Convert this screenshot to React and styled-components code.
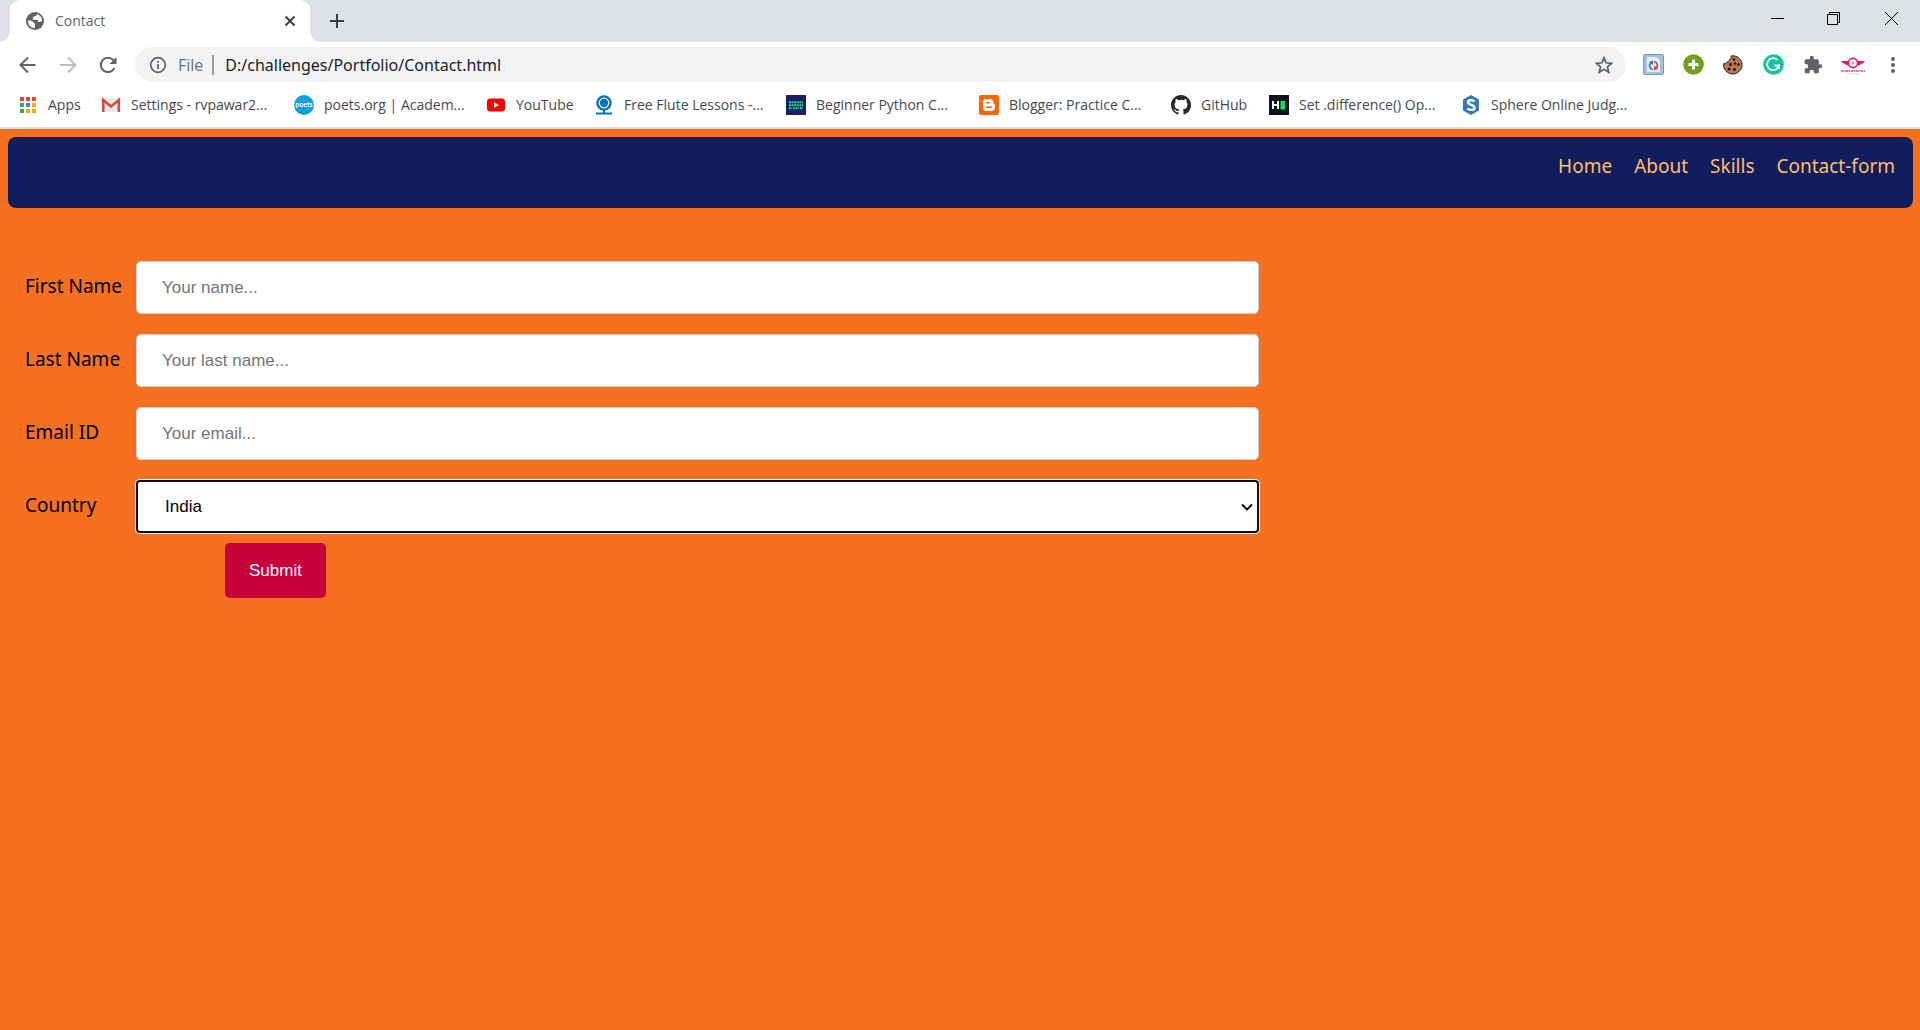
import React from "react";
import styled, { createGlobalStyle } from "styled-components";

const GlobalStyle = createGlobalStyle`
  * { box-sizing: border-box; }
  html, body, #root { margin: 0; min-height: 100vh; }
  body { background: #f57121; }
  button { border: 0; padding: 0; background: none; }
  svg { display: block; flex: none; }
`;

const Screen = styled.div`
  min-height: 100vh;
  display: flex;
  flex-direction: column;
  font-family: "Open Sans", "Noto Sans", sans-serif;
`;

const TabStrip = styled.div`
  height: 42px;
  background: #dee1e6;
  display: flex;
  align-items: flex-end;
  justify-content: space-between;
`;

const TabGroup = styled.div`
  display: flex;
  height: 100%;
`;

const TabCurve = styled.div`
  width: 10px;
  align-self: flex-end;
  height: 10px;
  background: radial-gradient(circle at ${(p) => (p.$right ? "100%" : "0")} 0, #dee1e6 9px, #fff 10px);
`;

const Tab = styled.div`
  width: 300px;
  background: #fff;
  border-radius: 10px 10px 0 0;
  display: flex;
  align-items: center;
  gap: 11px;
  padding: 0 14px 0 16px;
`;

const TabTitle = styled.span`
  flex: 1;
  font-size: 14px;
  line-height: 20px;
  color: #5f6368;
`;

const IconButton = styled.button`
  display: grid;
  place-items: center;
  width: ${(p) => p.$w || 40}px;
  height: ${(p) => p.$h || 36}px;
`;

const WindowButtons = styled.div`
  display: flex;
  align-self: flex-start;
`;

const Toolbar = styled.div`
  height: 45px;
  background: #fff;
  display: flex;
  align-items: center;
  padding: 0 7px 0 8px;
`;

const AddressBar = styled.label`
  flex: 1;
  height: 35px;
  margin: 0 7px;
  border-radius: 18px;
  background: #f1f3f4;
  display: flex;
  align-items: center;
  padding: 0 2px 0 14px;
`;

const Scheme = styled.span`
  font-size: 16px;
  line-height: 20px;
  color: #6b6f74;
  margin-left: 11px;
  padding-right: 9px;
  border-right: 2px solid #9a9da1;
`;

const Address = styled.input`
  flex: 1;
  min-width: 0;
  border: 0;
  outline: 0;
  background: none;
  padding: 0 0 0 11px;
  font: 16px/20px "Noto Sans", "Open Sans", sans-serif;
  color: #202124;
`;

const Bookmarks = styled.nav`
  height: 42px;
  background: #fff;
  border-bottom: 2px solid #dadce0;
  display: flex;
  align-items: center;
  padding: 0 0 4px 18px;
`;

const Bookmark = styled.a`
  display: flex;
  align-items: center;
  gap: 10px;
  width: ${(p) => p.$w}px;
  flex: none;
  font-size: 14px;
  line-height: 20px;
  color: #45494d;
  text-decoration: none;
  white-space: nowrap;
`;

const Page = styled.div`
  flex: 1;
  background: #f57121;
  padding: 8px 7px 8px 8px;
  font-family: "Noto Sans", "Open Sans", sans-serif;
`;

const SiteNav = styled.nav`
  height: 71px;
  background: #121d5e;
  border-radius: 8px;
  display: flex;
  justify-content: flex-end;
  gap: 22px;
  padding: 15px 18px;
`;

const SiteLink = styled.a`
  font-size: 19px;
  line-height: 28px;
  color: #ffbd69;
  text-decoration: none;
`;

const Form = styled.form`
  margin: 53px 17px 0;
  display: grid;
  grid-template-columns: 111px 60%;
  row-gap: 20px;
  align-items: center;
`;

const Label = styled.label`
  font-size: 19px;
  line-height: 28px;
  padding-bottom: 4px;
  color: #000;
  white-space: nowrap;
`;

const Input = styled.input`
  width: 100%;
  height: 53px;
  border: 1px solid #ccc;
  border-radius: 5px;
  padding: 0 25px;
  background: #fff;
  outline: 0;
  font: 17px/20px "Liberation Sans", Arial, sans-serif;
  &::placeholder { color: #757575; opacity: 1; }
`;

const SelectBox = styled.div`
  display: grid;
  align-items: center;
  > * { grid-area: 1 / 1; }
  > svg { justify-self: end; margin-right: 6px; pointer-events: none; }
`;

const Select = styled.select`
  width: 100%;
  height: 53px;
  appearance: none;
  border: 2px solid #101010;
  border-radius: 4px;
  box-shadow: 0 0 0 1px #fff;
  padding: 0 27px;
  background: #fff;
  color: #000;
  outline: 0;
  font: 17px/20px "Liberation Sans", Arial, sans-serif;
`;

const Actions = styled.div`
  grid-column: 1 / -1;
  margin-top: -10px;
  padding-left: 200px;
`;

const Submit = styled.button`
  padding: 0 24px;
  height: 55px;
  border-radius: 5px;
  background: #c70039;
  color: #fff;
  font: 17px/20px "Liberation Sans", Arial, sans-serif;
`;

const Globe = () => (
  <svg width="18" height="18" viewBox="0 0 18 18">
    <circle cx="9" cy="9" r="9" fill="#5f6368" />
    <path d="M2 8.500c2 0 4.500.3 5 1.600.4 1.200 2 .8 2 2.400v3.500C5 16.300 1.700 13 2 8.500ZM11 2.300c-.2 1.500-1.500 2-3 2.200-.8.200-.5 1.500-1.300 1.700l.3 1.500h3.500c1.500 0 1.500 2.300 3 2.300l2.500-.7c.5-3.500-2-6.300-5-7Z" fill="#fff" />
  </svg>
);
const Stroke = ({ d, size = 20, color = "#5f6368", w = 2, box = 20 }) => (
  <svg width={size} height={size} viewBox={`0 0 ${box} ${box}`} fill="none" stroke={color} strokeWidth={w}><path d={d} /></svg>
);
const Reload = () => (
  <svg width="20" height="20" viewBox="0 0 20 20" fill="none" stroke="#5f6368" strokeWidth="2">
    <path d="M16.500 13A7.200 7.200 0 1 1 15.500 5.200" /><path d="M18.500 2v7h-7Z" fill="#5f6368" stroke="none" />
  </svg>
);
const Info = () => (
  <svg width="18" height="18" viewBox="0 0 18 18"><circle cx="9" cy="9" r="7.300" fill="none" stroke="#5f6368" strokeWidth="1.700" /><path d="M8.100 8h1.800v5H8.100ZM8.100 5h1.800v1.800H8.100Z" fill="#5f6368" /></svg>
);
const Star = () => (
  <svg width="20" height="20" viewBox="0 0 20 20"><path d="m10 2.800 2.100 5 5.400.5-4.100 3.500 1.300 5.300-4.700-2.900-4.700 2.900 1.300-5.300-4.100-3.500 5.400-.5Z" fill="none" stroke="#5f6368" strokeWidth="1.700" /></svg>
);
const Puzzle = () => (
  <svg width="20" height="20" viewBox="0 0 24 24"><path d="M20.500 11H19V7c0-1.100-.9-2-2-2h-4V3.500a2.500 2.500 0 0 0-5 0V5H4c-1.100 0-2 .9-2 2v3.800h1.500a2.700 2.700 0 0 1 0 5.400H2V20c0 1.100.9 2 2 2h3.800v-1.500a2.700 2.700 0 0 1 5.400 0V22H17c1.100 0 2-.9 2-2v-4h1.500a2.500 2.500 0 0 0 0-5Z" fill="#5f6368" /></svg>
);
const SyncExt = () => (
  <svg width="21" height="21" viewBox="0 0 21 21"><rect x=".5" y=".5" width="20" height="20" rx="1.500" fill="#a3c3dc" stroke="#7198b8" /><path d="M4 3h9l4 3v12H4Z" fill="#e4effa" /><path d="M10 15.500a4 4 0 0 1-2.500-6.500" fill="none" stroke="#2f6fc0" strokeWidth="1.700" /><path d="M11 7.500a4 4 0 0 1 2.500 6.500" fill="none" stroke="#e03a2f" strokeWidth="1.700" /><path d="m6 8 4-1.500V11Z" fill="#2f6fc0" /><path d="m15.500 14-4.500 2.500V12Z" fill="#e03a2f" /></svg>
);
const PlusExt = () => (
  <svg width="21" height="21" viewBox="0 0 21 21"><circle cx="10.500" cy="10.500" r="10.300" fill="#739e1e" /><path d="M10.500 5.500v10M5.500 10.500h10" stroke="#fff" strokeWidth="3" /></svg>
);
const Cookie = () => (
  <svg width="20" height="20" viewBox="0 0 20 20"><path d="M8 1c2-.5 6-.2 8.500 2.500 3 3.300 3.500 8 .8 11.700-3 4-8.500 5-12.600 2.300C1.500 15.300.200 12 .8 8.500c1.500.6 2.700 0 2.900-1.500 1.800.2 3-.8 2.600-2.400C7.800 4.200 8.600 2.600 8 1Z" fill="#bd7a50" stroke="#26201e" strokeWidth="1" /><g fill="#111"><circle cx="11" cy="4.500" r="1.300" /><circle cx="7.500" cy="9.500" r="1.500" /><circle cx="12" cy="8.500" r="1.300" /><circle cx="15.500" cy="9.500" r="1.300" /><circle cx="6" cy="14" r="1.500" /><circle cx="11.500" cy="14.500" r="1.500" /></g></svg>
);
const Grammar = () => (
  <svg width="21" height="21" viewBox="0 0 21 21"><circle cx="10.500" cy="10.500" r="10.300" fill="#15c39a" /><path d="M14.500 6A6 6 0 1 0 16 11.500h-4.500M16 11.500V15" fill="none" stroke="#fff" strokeWidth="1.800" /></svg>
);
const Wings = () => (
  <svg width="26" height="22" viewBox="0 0 26 22"><path d="M1 7h8l-1 4.500-2-.5-1-1.300-2-.4ZM25 7h-8l1 4.500 2-.5 1-1.300 2-.4Z" fill="#e21b5a" /><circle cx="13" cy="9" r="4.600" fill="#fff" stroke="#e21b5a" strokeWidth="1.600" /><circle cx="13" cy="9" r="1.500" fill="#e98aa8" /><path d="M1 17h24" stroke="#d0507a" strokeWidth="1.400" strokeDasharray="2 .5" /><path d="M7 20h13" stroke="#eeb4c5" strokeDasharray="2 1" /></svg>
);
const Dots = () => (
  <svg width="20" height="20" viewBox="0 0 20 20" fill="#5f6368"><circle cx="10" cy="4" r="2" /><circle cx="10" cy="10" r="2" /><circle cx="10" cy="16" r="2" /></svg>
);

const AppsIcon = () => (
  <svg width="20" height="20" viewBox="0 0 20 20">
    {["#ea4335", "#ea4335", "#ea4335", "#34a853", "#4285f4", "#fbab05", "#34a853", "#fbab05", "#fbab05"].map((c, i) => (
      <rect key={i} x={2 + (i % 3) * 6} y={2 + Math.floor(i / 3) * 6} width="4" height="4" fill={c} />
    ))}
  </svg>
);
const Gmail = () => (
  <svg width="20" height="20" viewBox="0 0 20 20"><rect x="1" y="3" width="18" height="14" rx="1" fill="#ebebeb" /><path d="M2.200 17V5L10 11.500 17.800 5v12" fill="none" stroke="#db4a3e" strokeWidth="2.600" /></svg>
);
const Poets = () => (
  <svg width="20" height="20" viewBox="0 0 20 20"><circle cx="10" cy="10" r="10" fill="#0fa0dc" /><text x="10" y="12" textAnchor="middle" fontSize="7" fontWeight="700" fontFamily="Lato, sans-serif" fill="#fff">poets</text></svg>
);
const YouTube = () => (
  <svg width="20" height="20" viewBox="0 0 20 20"><rect x="1" y="3.500" width="18" height="13" rx="3" fill="#f00" /><path d="m8 7.300 5 2.700-5 2.700Z" fill="#fff" /></svg>
);
const Flute = () => (
  <svg width="20" height="20" viewBox="0 0 20 20" fill="none" stroke="#0873bd"><circle cx="10" cy="8" r="6.600" strokeWidth="2.400" /><circle cx="10" cy="8" r="4.200" fill="#0873bd" stroke="none" /><path d="M10 15v4M2 18.500h16" strokeWidth="2" /></svg>
);
const Keyboard = () => (
  <svg width="20" height="20" viewBox="0 0 20 20"><path fill="#1c1f62" d="M0 0h20v20H0z" /><path d="M3 7.200h14M3 10.200h14M3 13.200h3M7 13.200h6M14 13.200h3" stroke="#19d58d" strokeWidth="2" strokeDasharray="2 .6" /></svg>
);
const Blogger = () => (
  <svg width="20" height="20" viewBox="0 0 20 20"><rect width="20" height="20" rx="2" fill="#ff6501" /><path d="M7.500 4h3a4 4 0 0 1 4 4c0 1 1.500.5 1.500 2v2a4 4 0 0 1-4 4H8a4 4 0 0 1-4-4V7.500A3.500 3.500 0 0 1 7.500 4Z" fill="#fff" /><path d="M7.500 7.800h3M7.500 12.200h5" stroke="#ff6501" strokeWidth="1.600" strokeLinecap="round" /></svg>
);
const GitHub = () => (
  <svg width="20" height="20" viewBox="0 0 16 16"><path fill="#24292e" d="M8 0C3.580 0 0 3.580 0 8c0 3.540 2.290 6.530 5.470 7.590.4.070.55-.17.55-.38 0-.19-.01-.82-.01-1.490-2.010.37-2.530-.49-2.690-.94-.09-.23-.48-.94-.82-1.130-.28-.15-.68-.52-.01-.53.63-.01 1.080.58 1.230.82.72 1.210 1.870.87 2.330.66.07-.52.28-.87.51-1.070-1.780-.2-3.640-.89-3.640-3.950 0-.87.31-1.590.82-2.150-.08-.2-.36-1.020.08-2.120 0 0 .67-.21 2.200.82a7.600 7.600 0 0 1 4 0c1.530-1.040 2.200-.82 2.200-.82.44 1.100.16 1.920.08 2.120.51.56.82 1.270.82 2.150 0 3.070-1.870 3.750-3.650 3.950.29.25.54.73.54 1.480 0 1.070-.01 1.930-.01 2.200 0 .21.15.46.55.38A8 8 0 0 0 16 8c0-4.420-3.580-8-8-8Z" /></svg>
);
const Hacker = () => (
  <svg width="20" height="20" viewBox="0 0 20 20"><path fill="#0e141e" d="M0 0h20v20H0z" /><path d="M4 6v8M9 6v8M4 10h5" stroke="#fff" strokeWidth="2" /><path d="M11.500 6H16v8.500h-4.500z" fill="#05e35e" /></svg>
);
const Sphere = () => (
  <svg width="20" height="20" viewBox="0 0 20 20"><path d="m10 0 8 4.500v11L10 20l-8-4.500v-11Z" fill="#337ab7" /><path d="M13.500 6.500C12 4.800 7 4.500 7 7.300c0 3 6.500 2.200 6.500 5.400 0 3-5.500 2.600-7.200.8" fill="none" stroke="#fff" strokeWidth="2.400" /></svg>
);

const bookmarks = [
  { icon: AppsIcon, text: "Apps", w: 83 },
  { icon: Gmail, text: "Settings - rvpawar2...", w: 193 },
  { icon: Poets, text: "poets.org | Academ...", w: 192 },
  { icon: YouTube, text: "YouTube", w: 108 },
  { icon: Flute, text: "Free Flute Lessons -...", w: 192 },
  { icon: Keyboard, text: "Beginner Python C...", w: 193 },
  { icon: Blogger, text: "Blogger: Practice C...", w: 192 },
  { icon: GitHub, text: "GitHub", w: 98 },
  { icon: Hacker, text: "Set .difference() Op...", w: 192 },
  { icon: Sphere, text: "Sphere Online Judg...", w: 192 },
];
const extensions = [
  ["Sync", SyncExt], ["Add", PlusExt], ["Cookies", Cookie], ["Grammar", Grammar],
  ["Extensions", Puzzle], ["Profile", Wings], ["Menu", Dots],
];
const fields = [
  { id: "fname", label: "First Name", hint: "Your name..." },
  { id: "lname", label: "Last Name", hint: "Your last name..." },
  { id: "email", label: "Email ID", hint: "Your email..." },
];

export default function App() {
  return (
    <Screen>
      <GlobalStyle />
      <header>
        <TabStrip>
          <TabGroup>
            <TabCurve />
            <Tab>
              <Globe />
              <TabTitle>Contact</TabTitle>
              <IconButton $w={12} $h={20} aria-label="Close tab"><Stroke size={12} box={12} d="M1.500 1.500l9 9M10.500 1.500l-9 9" color="#3c4043" /></IconButton>
            </Tab>
            <TabCurve $right />
            <IconButton $w={34} $h={42} aria-label="New tab"><Stroke size={16} box={16} d="M8 1v14M1 8h14" color="#3c4043" /></IconButton>
          </TabGroup>
          <WindowButtons>
            <IconButton $w={56} aria-label="Minimize"><Stroke size={13} box={13} w={1} color="#000" d="M0 6.500h13" /></IconButton>
            <IconButton $w={57} aria-label="Restore"><Stroke size={13} box={13} w={1} color="#000" d="M.5 2.500h10v10H.5ZM2.500 2.500v-2h10v10h-2" /></IconButton>
            <IconButton $w={58} aria-label="Close"><Stroke size={13} box={13} w={1} color="#000" d="M0 0l13 13M13 0L0 13" /></IconButton>
          </WindowButtons>
        </TabStrip>
        <Toolbar>
          <IconButton aria-label="Back"><Stroke d="M17.500 10H3M10 2.500L2.500 10l7.500 7.500" /></IconButton>
          <IconButton aria-label="Forward"><Stroke color="#babcbe" d="M2 10h15M10 2.500l7.500 7.500-7.500 7.500" /></IconButton>
          <IconButton aria-label="Reload"><Reload /></IconButton>
          <AddressBar>
            <Info />
            <Scheme>File</Scheme>
            <Address aria-label="Address" defaultValue="D:/challenges/Portfolio/Contact.html" />
            <IconButton aria-label="Bookmark this page"><Star /></IconButton>
          </AddressBar>
          {extensions.map(([name, Icon]) => (
            <IconButton key={name} aria-label={name}><Icon /></IconButton>
          ))}
        </Toolbar>
        <Bookmarks>
          {bookmarks.map(({ icon: Icon, text, w }) => (
            <Bookmark key={text} href="#" $w={w}><Icon />{text}</Bookmark>
          ))}
        </Bookmarks>
      </header>
      <Page>
        <SiteNav>
          {["Home", "About", "Skills", "Contact-form"].map((t) => <SiteLink key={t} href="#">{t}</SiteLink>)}
        </SiteNav>
        <Form onSubmit={(e) => e.preventDefault()}>
          {fields.map(({ id, label, hint }) => (
            <React.Fragment key={id}>
              <Label htmlFor={id}>{label}</Label>
              <Input id={id} placeholder={hint} />
            </React.Fragment>
          ))}
          <Label htmlFor="country">Country</Label>
          <SelectBox>
            <Select id="country" defaultValue="India"><option>India</option></Select>
            <Stroke size={12} box={12} color="#101010" d="M1 3.500l5 5 5-5" />
          </SelectBox>
          <Actions><Submit type="submit">Submit</Submit></Actions>
        </Form>
      </Page>
    </Screen>
  );
}
